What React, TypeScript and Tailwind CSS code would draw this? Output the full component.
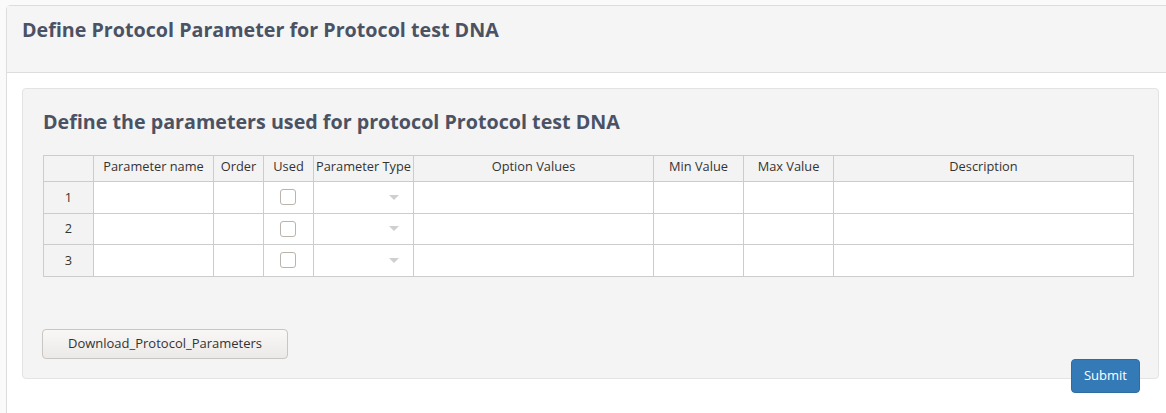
import React from 'react'

const columns = [
  { label: '', width: 'w-[50px]' },
  { label: 'Parameter name', width: 'w-[120px]' },
  { label: 'Order', width: 'w-[50px]' },
  { label: 'Used', width: 'w-[50px]' },
  { label: 'Parameter Type', width: 'w-[100px]' },
  { label: 'Option Values', width: 'w-[240px]' },
  { label: 'Min Value', width: 'w-[90px]' },
  { label: 'Max Value', width: 'w-[90px]' },
  { label: 'Description', width: 'w-[300px]' },
]

const rows = [1, 2, 3]

const cell = 'border border-[#cccccc] p-0'

export default function App() {
  return (
    <div
      className="h-[413px] w-[1166px] overflow-hidden bg-[#fafafa] pl-[6px] pt-[5px]"
      style={{ fontFamily: '"Open Sans", "Liberation Sans", sans-serif' }}
    >
      <div className="w-[1169px] rounded-tl-[4px] border border-[#dddddd] bg-white">
        {/* panel header */}
        <div className="h-[67px] border-b border-[#dddddd] bg-[#f5f5f5] px-[15px] pt-[12px]">
          <h1 className="text-[19.7px] font-bold leading-[24px] text-[#4b5264]">
            Define Protocol Parameter for Protocol test DNA
          </h1>
        </div>

        <div className="px-[15px] pt-[15px] pb-[40px]">
          <div className="h-[291px] rounded-[4px] border border-[#e3e3e3] bg-[#f4f4f4] px-[20px] pt-[19px]">
            <h2 className="text-[19.7px] font-bold leading-[28px] text-[#4b5264]">
              Define the parameters used for protocol Protocol test DNA
            </h2>

            <table className="mt-[19px] table-fixed border-collapse text-[12.8px] text-[#333333]">
              <thead>
                <tr className="h-[26px] bg-[#f3f3f3]">
                  {columns.map((c, i) => (
                    <th key={i} className={`${cell} ${c.width} pb-[5px] font-normal leading-[20px]`}>
                      {c.label}
                    </th>
                  ))}
                </tr>
              </thead>
              <tbody>
                {rows.map((n) => (
                  <tr key={n} className="h-[31.6px] bg-white">
                    <td className={`${cell} bg-[#f3f3f3] text-center`}>{n}</td>
                    <td className={cell} />
                    <td className={cell} />
                    <td className={cell}>
                      <div className="flex justify-center">
                        <span className="-ml-[2px] block h-[16px] w-[16px] rounded-[3px] border border-[#b9b4ae] bg-white" />
                      </div>
                    </td>
                    <td className={cell}>
                      <div className="flex justify-end pr-[14px]">
                        <span className="block h-0 w-0 border-x-[5px] border-t-[5px] border-x-transparent border-t-[#cfcfcf]" />
                      </div>
                    </td>
                    <td className={cell} />
                    <td className={cell} />
                    <td className={cell} />
                    <td className={cell} />
                  </tr>
                ))}
              </tbody>
            </table>

            <button className="-ml-px mt-[52px] h-[30px] w-[246px] rounded-[4px] border border-[#c8c5c2] bg-gradient-to-b from-[#f9f8f7] to-[#ebeae8] text-[13px] text-[#333333]">
              Download_Protocol_Parameters
            </button>
          </div>

          <div className="-mt-[20px] flex justify-end pr-[19px]">
            <button className="relative h-[34px] w-[69px] rounded-[4px] border border-[#2e6da4] bg-[#337ab7] text-[13px] text-white">
              Submit
            </button>
          </div>
        </div>
      </div>
    </div>
  )
}
